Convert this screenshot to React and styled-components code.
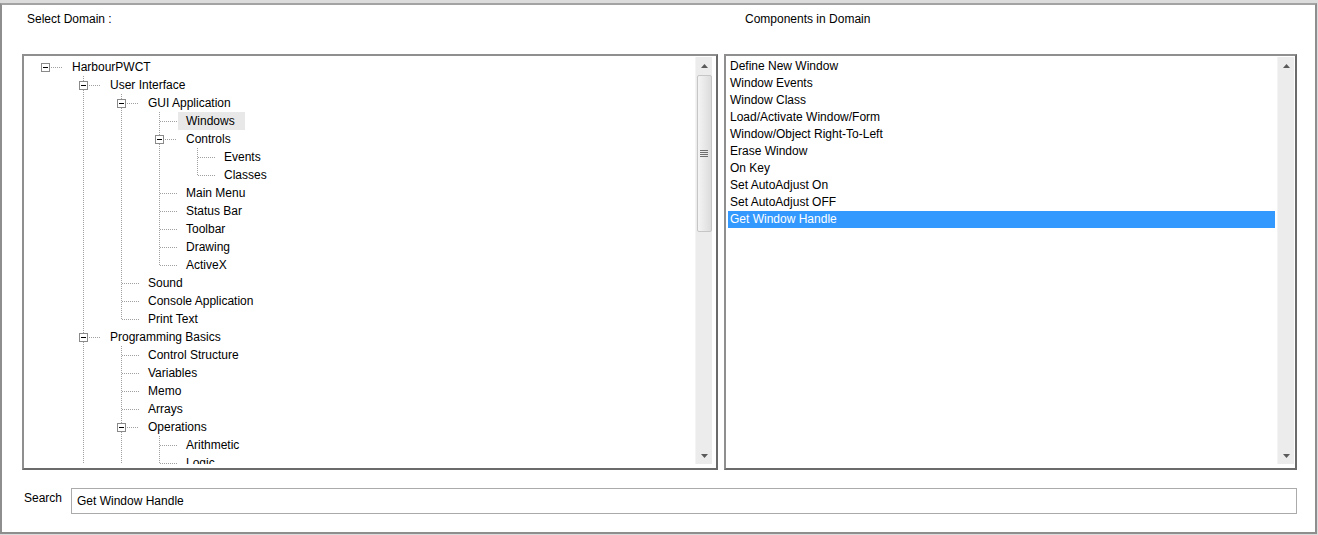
import React from "react";
import styled, { createGlobalStyle } from "styled-components";

const Global = createGlobalStyle`
  html, body { margin: 0; padding: 0; }
  body {
    background: #dcdcdc;
    font-family: "Liberation Sans", Arial, sans-serif;
    font-size: 12px;
    color: #000;
    overflow: hidden;
  }
`;

const Window = styled.div`
  margin-top: 3px;
  width: 1317px;
  height: 531px;
  box-sizing: border-box;
  border: 2px solid #8e8e8e;
  border-top-color: #a3a3a3;
  background: #fff;
  display: flex;
  flex-direction: column;
`;

const Main = styled.div`
  display: grid;
  grid-template-columns: 696px 573px;
  grid-template-rows: 49px 416px;
  column-gap: 6px;
  padding: 0 18px 0 20px;
`;

const Caption = styled.div`
  padding-top: 7px;
  padding-left: ${(p) => p.$indent}px;
  line-height: 14px;
`;

const Frame = styled.div`
  box-sizing: border-box;
  border: 2px solid;
  border-color: #8f8f8f #6b6b6b #6b6b6b #8f8f8f;
  padding: 1px 1px 4px 1px;
  display: flex;
  min-height: 0;
  overflow: hidden;
  background: #fff;
`;

const TreeArea = styled.div`
  flex: 1;
  overflow: hidden;
  padding: 1px 0 0 1px;
`;

const Row = styled.div`
  display: flex;
  align-items: center;
  height: 18px;
  white-space: nowrap;
`;

const NodeLabel = styled.span`
  padding: 0 10px 0 8px;
  line-height: 18px;
  background: ${(p) => (p.$active ? "#e8e8e8" : "transparent")};
`;

const CellSvg = styled.svg`
  flex: none;
  display: block;
`;

const ScrollBar = styled.div`
  flex: none;
  width: 17px;
  margin-right: ${(p) => p.$gap || 0}px;
  display: flex;
  flex-direction: column;
  background: #ececec;
  border-left: 1px solid #f4f4f4;
  box-sizing: border-box;
`;

const ArrowBtn = styled.div`
  flex: none;
  height: 17px;
  display: flex;
  align-items: center;
  justify-content: center;
`;

const Track = styled.div`
  flex: 1;
  display: flex;
  flex-direction: column;
  align-items: center;
  padding-top: ${(p) => p.$offset}px;
`;

const Thumb = styled.div`
  width: 15px;
  box-sizing: border-box;
  height: ${(p) => p.$size}px;
  border: 1px solid #c6c6c6;
  border-radius: 2px;
  background: linear-gradient(to right, #f4f4f4, #e6e6e6 60%, #dcdcdc);
  display: flex;
  align-items: center;
  justify-content: center;
`;

const ListArea = styled.div`
  flex: 1;
  overflow: hidden;
  padding-top: 1px;
`;

const ListItem = styled.div`
  height: 17px;
  line-height: 17px;
  padding-left: 2px;
  margin: 0 2px 0 1px;
  white-space: nowrap;
  background: ${(p) => (p.$selected ? "#3399ff" : "transparent")};
  color: ${(p) => (p.$selected ? "#fff" : "#000")};
`;

const SearchRow = styled.div`
  display: flex;
  align-items: flex-start;
  margin-top: 18px;
  padding: 0 18px 0 22px;
`;

const SearchLabel = styled.label`
  width: 47px;
  flex: none;
  padding-top: 3px;
  line-height: 14px;
`;

const SearchInput = styled.input`
  flex: 1;
  height: 26px;
  box-sizing: border-box;
  border: 1px solid #ababab;
  padding: 0 5px;
  margin: 0;
  font-family: "Liberation Sans", Arial, sans-serif;
  font-size: 12px;
  color: #000;
  background: #fff;
  outline: none;
`;

const LINE = "#a0a0a0";

function Cell({ up, down, horiz, box }) {
  return (
    <CellSvg width={38} height={18} viewBox="0 0 38 18">
      {up && (
        <line x1="19.5" y1="0" x2="19.5" y2={box ? 5 : 9} stroke={LINE} strokeDasharray="1 1" />
      )}
      {down && (
        <line x1="19.5" y1={box ? 14 : 10} x2="19.5" y2="18" stroke={LINE} strokeDasharray="1 1" />
      )}
      {horiz && (
        <line x1={box ? 25 : 20} y1="9.5" x2="37" y2="9.5" stroke={LINE} strokeDasharray="1 1" />
      )}
      {box && (
        <g>
          <rect x="15.5" y="5.5" width="8" height="8" fill="#fff" stroke="#8a8a8a" />
          <line x1="17" y1="9.5" x2="22" y2="9.5" stroke="#000" />
        </g>
      )}
    </CellSvg>
  );
}

const tree = {
  label: "HarbourPWCT",
  children: [
    {
      label: "User Interface",
      children: [
        {
          label: "GUI Application",
          children: [
            { label: "Windows", active: true },
            { label: "Controls", children: [{ label: "Events" }, { label: "Classes" }] },
            { label: "Main Menu" },
            { label: "Status Bar" },
            { label: "Toolbar" },
            { label: "Drawing" },
            { label: "ActiveX" },
          ],
        },
        { label: "Sound" },
        { label: "Console Application" },
        { label: "Print Text" },
      ],
    },
    {
      label: "Programming Basics",
      children: [
        { label: "Control Structure" },
        { label: "Variables" },
        { label: "Memo" },
        { label: "Arrays" },
        {
          label: "Operations",
          children: [{ label: "Arithmetic" }, { label: "Logic" }, { label: "Comparison" }],
        },
        { label: "Functions" },
      ],
    },
    { label: "Data Files", children: [{ label: "Files" }] },
  ],
};

function flatten(node, depth, ancestors, hasNext, out) {
  const kids = node.children || [];
  out.push({
    label: node.label,
    active: !!node.active,
    depth,
    ancestors,
    hasNext,
    hasChildren: kids.length > 0,
  });
  kids.forEach((c, i) =>
    flatten(c, depth + 1, [...ancestors, hasNext], i < kids.length - 1, out)
  );
  return out;
}

// only the rows that fit in the visible part of the tree
const rows = flatten(tree, 0, [], false, []).slice(0, 23);

function TreeRow({ r }) {
  const cells = [];
  for (let k = 0; k < r.depth; k++) {
    const on = k >= 1 && r.ancestors[k];
    cells.push(<Cell key={k} up={on} down={on} />);
  }
  cells.push(
    <Cell
      key="own"
      up={r.depth >= 1}
      down={r.depth >= 1 && r.hasNext}
      horiz
      box={r.hasChildren}
    />
  );
  return (
    <Row>
      {cells}
      <NodeLabel $active={r.active}>{r.label}</NodeLabel>
    </Row>
  );
}

function Arrow({ dir }) {
  return (
    <svg width="7" height="4" viewBox="0 0 7 4">
      {dir === "up" ? (
        <polygon points="0,4 3.5,0 7,4" fill="#5a5a5a" />
      ) : (
        <polygon points="0,0 7,0 3.5,4" fill="#5a5a5a" />
      )}
    </svg>
  );
}

function VScroll({ thumbTop, thumbSize, gap }) {
  return (
    <ScrollBar $gap={gap}>
      <ArrowBtn>
        <Arrow dir="up" />
      </ArrowBtn>
      <Track $offset={thumbTop || 0}>
        {thumbSize ? (
          <Thumb $size={thumbSize}>
            <svg width="8" height="8" viewBox="0 0 8 8">
              <g stroke="#6e6e6e">
                <line x1="0" y1="0.5" x2="8" y2="0.5" />
                <line x1="0" y1="2.5" x2="8" y2="2.5" />
                <line x1="0" y1="4.5" x2="8" y2="4.5" />
                <line x1="0" y1="6.5" x2="8" y2="6.5" />
              </g>
            </svg>
          </Thumb>
        ) : null}
      </Track>
      <ArrowBtn>
        <Arrow dir="down" />
      </ArrowBtn>
    </ScrollBar>
  );
}

const components = [
  "Define New Window",
  "Window Events",
  "Window Class",
  "Load/Activate Window/Form",
  "Window/Object Right-To-Left",
  "Erase Window",
  "On Key",
  "Set AutoAdjust On",
  "Set AutoAdjust OFF",
  "Get Window Handle",
];

export default function App() {
  return (
    <>
      <Global />
      <Window>
        <Main>
          <Caption $indent={5}>Select Domain :</Caption>
          <Caption $indent={21}>Components in Domain</Caption>
          <Frame>
            <TreeArea>
              {rows.map((r, i) => (
                <TreeRow key={i} r={r} />
              ))}
            </TreeArea>
            <VScroll thumbTop={1} thumbSize={157} gap={3} />
          </Frame>
          <Frame>
            <ListArea>
              {components.map((c) => (
                <ListItem key={c} $selected={c === "Get Window Handle"}>
                  {c}
                </ListItem>
              ))}
            </ListArea>
            <VScroll />
          </Frame>
        </Main>
        <SearchRow>
          <SearchLabel htmlFor="search">Search</SearchLabel>
          <SearchInput id="search" readOnly value="Get Window Handle" />
        </SearchRow>
      </Window>
    </>
  );
}
